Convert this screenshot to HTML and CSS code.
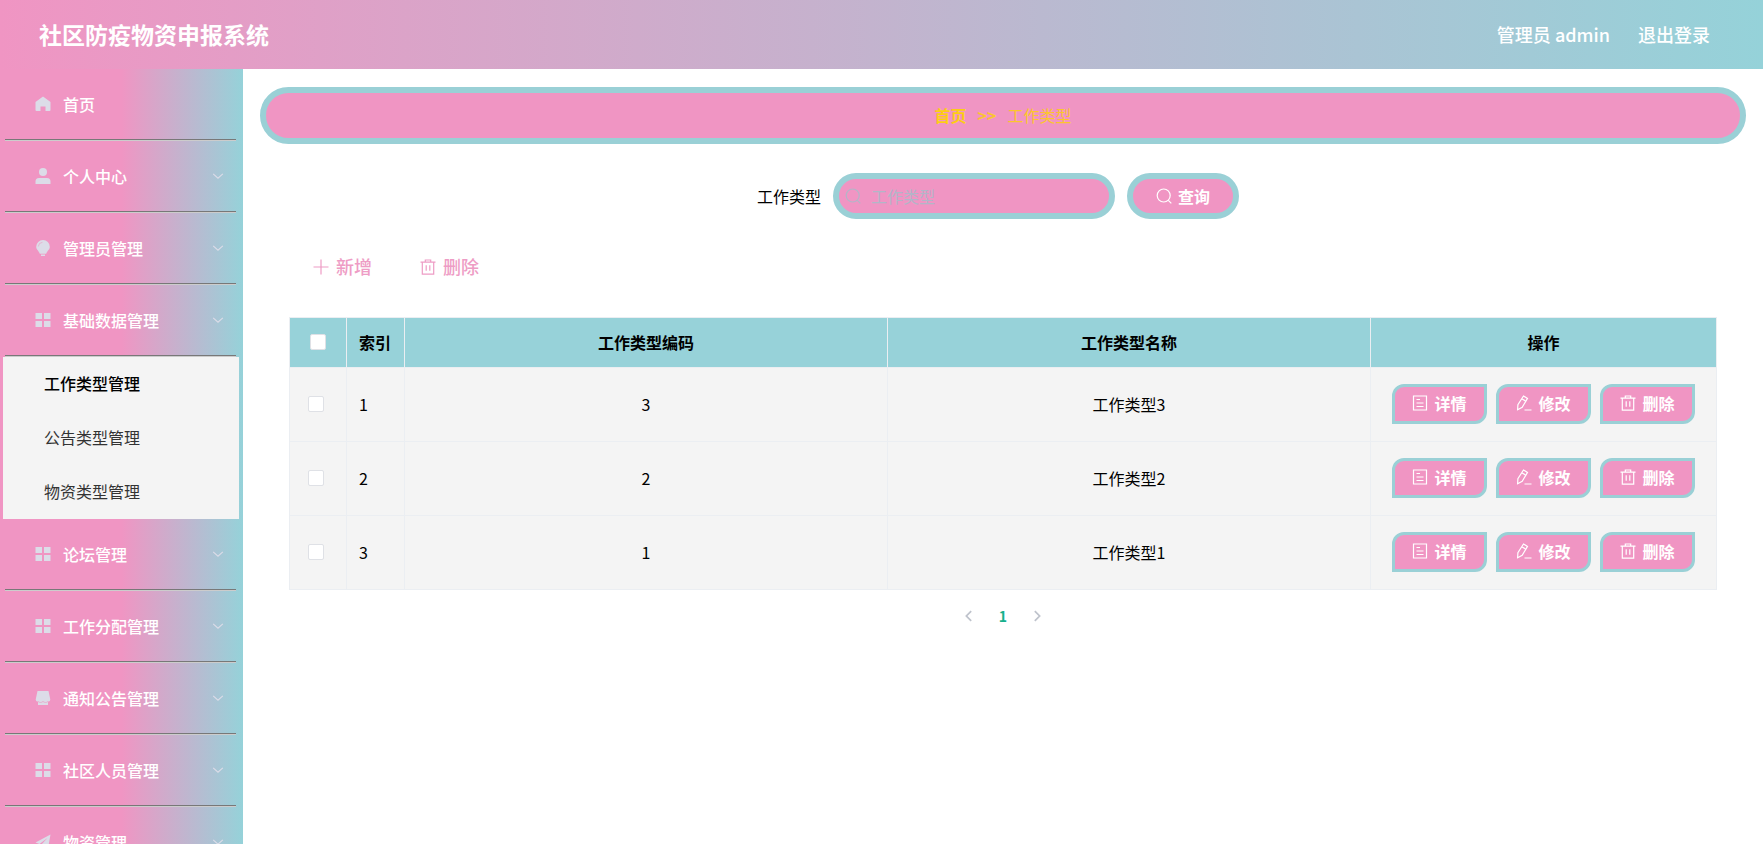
FILE: index.html
```html
<!DOCTYPE html>
<html lang="zh-CN">
<head>
    <meta charset="UTF-8">
    <meta name="viewport" content="width=device-width, initial-scale=1.0">
    <title>社区防疫物资申报系统</title>
    <link rel="stylesheet" href="styles.css">
</head>
<body>
    <!-- Icon sprite -->
    <svg class="sprite" aria-hidden="true">
        <symbol id="i-home" viewBox="0 0 16 16"><path fill="currentColor" d="M8 .5 15.500 6v8a1 1 0 0 1-1 1H10.500v-4.500h-5V15H1.500a1 1 0 0 1-1-1V6z"/></symbol>
        <symbol id="i-user" viewBox="0 0 16 16"><circle cx="8" cy="4" r="4" fill="currentColor"/><path fill="currentColor" d="M.5 16v-2.500A3.500 3.500 0 0 1 4 10h8a3.500 3.500 0 0 1 3.500 3.500V16z"/></symbol>
        <symbol id="i-bulb" viewBox="0 0 16 16"><path fill="currentColor" d="M8 0a6.800 6.800 0 0 1 6.800 6.800c0 3-2.800 4.200-3.600 7H4.800c-.8-2.800-3.600-4-3.600-7A6.800 6.800 0 0 1 8 0zM6 14.500h4V16H6z"/><path fill="none" stroke="#e7a9cb" stroke-width=".8" d="M3.300 6.500A4.600 4.600 0 0 1 7.500 2.300"/></symbol>
        <symbol id="i-menu" viewBox="0 0 16 16"><path fill="currentColor" d="M.5 1h6.500v6H.5zM9 1h6.500v6H9zM.5 9h6.500v6H.5zM9 9h6.500v6H9z"/></symbol>
        <symbol id="i-shop" viewBox="0 0 16 16"><path fill="currentColor" d="M2.500 1h11l1.800 8.500a2 2 0 0 1-1.800 2h-11a2 2 0 0 1-1.800-2zM3 11h10v4H3z"/><path fill="none" stroke="#e7a9cb" stroke-width=".9" d="M3 11.500c1.700 1.300 3.300 1.300 5 0 1.700 1.300 3.300 1.300 5 0"/></symbol>
        <symbol id="i-send" viewBox="0 0 16 16"><path fill="currentColor" d="M.5 8.500 15.500.5l-2.500 14-4.500-2L6 15.500V11l6.500-7L4.500 10z"/></symbol>
        <symbol id="i-down" viewBox="0 0 16 16"><path fill="none" stroke="currentColor" stroke-width="1.300" d="M2.500 5.500 8 10.500l5.500-5"/></symbol>
        <symbol id="i-left" viewBox="0 0 16 16"><path fill="none" stroke="currentColor" stroke-width="2" d="M10.500 2.500 5 8l5.500 5.500"/></symbol>
        <symbol id="i-right" viewBox="0 0 16 16"><path fill="none" stroke="currentColor" stroke-width="2" d="M5.500 2.500 11 8l-5.500 5.500"/></symbol>
        <symbol id="i-search" viewBox="0 0 16 16"><circle cx="7.700" cy="7.500" r="6.500" fill="none" stroke="currentColor" stroke-width="1.200"/><path stroke="currentColor" stroke-width="1.200" d="m12.300 12.300 3 3"/></symbol>
        <symbol id="i-plus" viewBox="0 0 16 16"><path stroke="currentColor" stroke-width="1.200" d="M8 .5v15M.5 8h15"/></symbol>
        <symbol id="i-delete" viewBox="0 0 16 16"><path fill="none" stroke="currentColor" stroke-width="1.200" d="M.5 3.200h15M5.300 3V1h5.400v2M2.300 3.200v12h11.400v-12M6.200 6.300v5.500M9.800 6.300v5.500"/></symbol>
        <symbol id="i-doc" viewBox="0 0 16 16"><path fill="none" stroke="currentColor" stroke-width="1.200" d="M1.500 1h13v14h-13zM4.500 4.500h3.500M4.500 8h7M4.500 11.500h7"/></symbol>
        <symbol id="i-edit" viewBox="0 0 16 16"><path fill="none" stroke="currentColor" stroke-width="1.200" d="M7.500 1 11.500 3.400 6.200 12.300 1.600 14.800l.3-5zM5.800 3.800l4 2.400M8.500 15h7"/></symbol>
    </svg>

    <!-- Header -->
    <header class="header">
        <h1 class="header-title">社区防疫物资申报系统</h1>
        <div class="header-right">
            <span>管理员 admin</span>
            <a href="#">退出登录</a>
        </div>
    </header>

    <div class="layout">
        <!-- Sidebar -->
        <nav class="sidebar">
            <ul class="menu">
                <li><a href="#" class="menu-item"><svg class="menu-icon"><use href="#i-home"/></svg>首页</a></li>
                <li><a href="#" class="menu-item"><svg class="menu-icon"><use href="#i-user"/></svg>个人中心<svg class="arrow"><use href="#i-down"/></svg></a></li>
                <li><a href="#" class="menu-item"><svg class="menu-icon"><use href="#i-bulb"/></svg>管理员管理<svg class="arrow"><use href="#i-down"/></svg></a></li>
                <li>
                    <a href="#" class="menu-item"><svg class="menu-icon"><use href="#i-menu"/></svg>基础数据管理<svg class="arrow"><use href="#i-down"/></svg></a>
                    <ul class="submenu">
                        <li><a href="#" class="active">工作类型管理</a></li>
                        <li><a href="#">公告类型管理</a></li>
                        <li><a href="#">物资类型管理</a></li>
                    </ul>
                </li>
                <li><a href="#" class="menu-item"><svg class="menu-icon"><use href="#i-menu"/></svg>论坛管理<svg class="arrow"><use href="#i-down"/></svg></a></li>
                <li><a href="#" class="menu-item"><svg class="menu-icon"><use href="#i-menu"/></svg>工作分配管理<svg class="arrow"><use href="#i-down"/></svg></a></li>
                <li><a href="#" class="menu-item"><svg class="menu-icon"><use href="#i-shop"/></svg>通知公告管理<svg class="arrow"><use href="#i-down"/></svg></a></li>
                <li><a href="#" class="menu-item"><svg class="menu-icon"><use href="#i-menu"/></svg>社区人员管理<svg class="arrow"><use href="#i-down"/></svg></a></li>
                <li><a href="#" class="menu-item"><svg class="menu-icon"><use href="#i-send"/></svg>物资管理<svg class="arrow"><use href="#i-down"/></svg></a></li>
            </ul>
        </nav>

        <!-- Main content -->
        <main class="main">
            <div class="breadcrumb">
                <a href="#">首页</a>
                <b>&gt;&gt;</b>
                <span>工作类型</span>
            </div>

            <form class="search-form">
                <label for="type-name">工作类型</label>
                <div class="search-box">
                    <svg class="icon"><use href="#i-search"/></svg>
                    <input type="text" id="type-name" placeholder="工作类型">
                </div>
                <button type="button" class="search-btn"><svg class="icon"><use href="#i-search"/></svg>查询</button>
            </form>

            <div class="content">
                <div class="toolbar">
                    <button type="button"><svg class="icon"><use href="#i-plus"/></svg>新增</button>
                    <button type="button"><svg class="icon"><use href="#i-delete"/></svg>删除</button>
                </div>

                <table class="table">
                    <colgroup>
                        <col class="col-check">
                        <col class="col-index">
                        <col>
                        <col>
                        <col class="col-action">
                    </colgroup>
                    <thead>
                        <tr>
                            <th><input type="checkbox" aria-label="全选"></th>
                            <th class="left">索引</th>
                            <th>工作类型编码</th>
                            <th>工作类型名称</th>
                            <th>操作</th>
                        </tr>
                    </thead>
                    <tbody>
                        <tr>
                            <td class="check"><input type="checkbox" aria-label="选择 1"></td>
                            <td class="left">1</td>
                            <td>3</td>
                            <td>工作类型3</td>
                            <td>
                                <div class="actions">
                                    <button type="button"><svg class="icon"><use href="#i-doc"/></svg>详情</button>
                                    <button type="button"><svg class="icon"><use href="#i-edit"/></svg>修改</button>
                                    <button type="button"><svg class="icon"><use href="#i-delete"/></svg>删除</button>
                                </div>
                            </td>
                        </tr>
                        <tr>
                            <td class="check"><input type="checkbox" aria-label="选择 2"></td>
                            <td class="left">2</td>
                            <td>2</td>
                            <td>工作类型2</td>
                            <td>
                                <div class="actions">
                                    <button type="button"><svg class="icon"><use href="#i-doc"/></svg>详情</button>
                                    <button type="button"><svg class="icon"><use href="#i-edit"/></svg>修改</button>
                                    <button type="button"><svg class="icon"><use href="#i-delete"/></svg>删除</button>
                                </div>
                            </td>
                        </tr>
                        <tr>
                            <td class="check"><input type="checkbox" aria-label="选择 3"></td>
                            <td class="left">3</td>
                            <td>1</td>
                            <td>工作类型1</td>
                            <td>
                                <div class="actions">
                                    <button type="button"><svg class="icon"><use href="#i-doc"/></svg>详情</button>
                                    <button type="button"><svg class="icon"><use href="#i-edit"/></svg>修改</button>
                                    <button type="button"><svg class="icon"><use href="#i-delete"/></svg>删除</button>
                                </div>
                            </td>
                        </tr>
                    </tbody>
                </table>

                <div class="pagination">
                    <button type="button" aria-label="上一页"><svg><use href="#i-left"/></svg></button>
                    <button type="button" class="current">1</button>
                    <button type="button" aria-label="下一页"><svg><use href="#i-right"/></svg></button>
                </div>
            </div>
        </main>
    </div>
</body>
</html>
```

FILE: styles.css
```css
/* Global Styles */
* {
    box-sizing: border-box;
}

body {
    margin: 0;
    height: 100vh;
    display: flex;
    flex-direction: column;
    overflow: hidden;
    font-family: "Noto Sans CJK SC", sans-serif;
    font-size: 16px;
    line-height: 24px;
    color: #000;
    background: #fff;
}

a {
    color: inherit;
    text-decoration: none;
}

ul {
    margin: 0;
    padding: 0;
    list-style: none;
}

button, input {
    margin: 0;
    font-family: inherit;
    font-size: 16px;
    line-height: 24px;
}

button {
    display: flex;
    align-items: center;
    justify-content: center;
    padding: 0;
    border: none;
    background: none;
    cursor: pointer;
}

.sprite {
    display: none;
}

.icon {
    width: 16px;
    height: 16px;
    flex: none;
}

/* Header */
.header {
    flex: none;
    height: 69px;
    padding: 0 53px 2px 39px;
    display: flex;
    align-items: center;
    justify-content: space-between;
    color: #fff;
    background: linear-gradient(90deg, #f095c3, #95d2d9);
}

.header-title {
    margin: 0;
    font-size: 23px;
    font-weight: bold;
}

.header-right {
    display: flex;
    gap: 28px;
    font-size: 18px;
    font-weight: 500;
}

.layout {
    flex: 1;
    min-height: 0;
    display: flex;
}

/* Sidebar */
.sidebar {
    flex: none;
    width: 243px;
    overflow-y: auto;
    scrollbar-width: none;
    background: linear-gradient(90deg, #f095c3 50%, #95d2d9);
}

.menu-item {
    height: 72px;
    margin: 0 7px 0 5px;
    padding: 0 11px 0 30px;
    display: flex;
    align-items: center;
    color: #fff;
    font-weight: 500;
    border-bottom: 2px groove #ccc;
}

.menu-icon {
    width: 16px;
    height: 16px;
    margin-right: 12px;
    color: #dcdce8;
}

.arrow {
    width: 14px;
    height: 14px;
    margin-left: auto;
    color: #dcdce8;
}

.submenu {
    margin: 0 4px 0 3px;
    background: #f4f4f4;
}

.submenu a {
    display: block;
    padding: 14px 41px 16px;
    color: #333;
}

.submenu .active {
    color: #000;
    font-weight: 500;
}

/* Main */
.main {
    flex: 1;
    min-width: 0;
    overflow: auto;
    padding: 18px 17px;
}

.breadcrumb {
    height: 57px;
    padding-bottom: 2px;
    display: flex;
    align-items: center;
    justify-content: center;
    gap: 11px;
    color: #fcc62d;
    border: 6px solid #9ad0d6;
    border-radius: 30px;
    background: #f095c3;
}

.breadcrumb a {
    font-weight: bold;
    color: #fdcd15;
}

/* Search */
.search-form {
    display: flex;
    align-items: center;
    justify-content: center;
    gap: 12px;
    margin: 29px 10px 0 0;
}

.search-box, .search-btn {
    height: 46px;
    display: flex;
    align-items: center;
    border: 6px solid #9ad0d6;
    border-radius: 23px;
    background: #f095c3;
}

.search-box {
    width: 282px;
    padding: 0 6px;
    gap: 10px;
    color: #b2b6c8;
}

.search-box input {
    flex: 1;
    min-width: 0;
    padding: 0;
    border: none;
    outline: none;
    background: none;
    color: #fff;
}

.search-box input::placeholder {
    color: #b2b6c8;
}

.search-btn {
    padding: 0 23px;
    gap: 6px;
    color: #fff;
    font-weight: bold;
}

/* Toolbar */
.content {
    padding: 31px 29px;
}

.toolbar {
    display: flex;
    gap: 48px;
    padding: 3px 24px;
    margin-bottom: 34px;
}

.toolbar button {
    gap: 7px;
    font-size: 18px;
    line-height: 27px;
    font-weight: 500;
    color: #ee9cc5;
}

/* Table */
.table {
    width: 100%;
    table-layout: fixed;
    border-collapse: collapse;
    text-align: center;
}

.col-check {
    width: 57px;
}

.col-index {
    width: 58px;
}

.col-action {
    width: 346px;
}

.table th, .table td {
    padding: 0 12px 1px;
    border: 1px solid #ebeef2;
}

.table th {
    height: 50px;
    font-weight: bold;
    background: #97d2d9;
}

.table td {
    height: 74px;
    background: #f4f4f4;
}

.table .left {
    text-align: left;
}

.table .check {
    padding-right: 17px;
}

.table input {
    appearance: none;
    display: block;
    width: 16px;
    height: 16px;
    margin: 0 auto;
    border: 1px solid #dfe1e6;
    border-radius: 2px;
    background: #fff;
}

.actions {
    display: flex;
    justify-content: center;
    gap: 9px;
}

.actions button {
    width: 95px;
    height: 40px;
    padding-bottom: 2px;
    gap: 6px;
    color: #fff;
    font-weight: bold;
    border: 3px solid #9ad0d6;
    border-radius: 12px 0;
    background: #f095c3;
}

/* Pagination */
.pagination {
    display: flex;
    justify-content: center;
    margin-top: 14px;
}

.pagination button {
    width: 34px;
    font-size: 14px;
    font-weight: bold;
    color: #bfc3cc;
}

.pagination .current {
    color: #18b08c;
}

.pagination svg {
    width: 14px;
    height: 14px;
}
```
